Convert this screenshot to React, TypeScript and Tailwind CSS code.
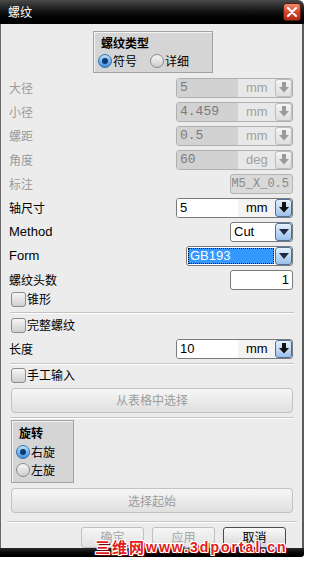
import React from 'react';

const cjk = "font-['Noto_Sans_CJK_SC',sans-serif]";
const latin = "font-['Liberation_Sans','Noto_Sans_CJK_SC',sans-serif]";
const mono = "font-['Liberation_Mono',monospace]";

function SpinArrow({ on }: { on: boolean }) {
  return (
    <div
      className={`w-[17px] h-full flex items-center justify-center rounded-[3px] border ${
        on
          ? 'border-[#4c6f9c] bg-gradient-to-b from-[#e4f0fc] to-[#9cc0ea]'
          : 'border-[#bdbdbd] bg-gradient-to-b from-[#f4f4f4] to-[#dedede]'
      }`}
    >
      <svg width="10" height="11" viewBox="0 0 10 11">
        <path d="M3 0h4v5h3l-5 5.5L0 5h3z" fill={on ? '#111' : '#9a9a9a'} />
      </svg>
    </div>
  );
}

function ComboArrow() {
  return (
    <div className="w-[17px] h-full flex items-center justify-center rounded-[3px] border border-[#4c6f9c] bg-gradient-to-b from-[#e4f0fc] to-[#9cc0ea]">
      <svg width="10" height="6" viewBox="0 0 10 6">
        <path d="M0 0h10L5 6z" fill="#1c2a44" />
      </svg>
    </div>
  );
}

function Spinner({ value, unit, on }: { value: string; unit: string; on: boolean }) {
  return (
    <div
      className={`w-[117px] h-[20px] flex rounded-[3px] border ${
        on ? 'border-[#7a7a7a] bg-white' : 'border-[#b0b0b0] bg-[#e6e6e6]'
      }`}
    >
      <div
        className={`w-[62px] h-full flex items-center pl-[3px] rounded-l-[2px] ${
          on ? `bg-white text-black text-[13px] ${latin}` : `bg-[#d2d2d2] text-[#7a7a7a] text-[13px] ${mono}`
        }`}
      >
        {value}
      </div>
      <div
        className={`w-[37px] h-full flex items-center justify-center text-[13px] ${latin} ${
          on ? 'bg-[#f3f3f3] text-black' : 'bg-[#e8e8e8] text-[#a0a0a0]'
        }`}
      >
        {unit}
      </div>
      <SpinArrow on={on} />
    </div>
  );
}

function Row({ label, on, children }: { label: string; on: boolean; children: React.ReactNode }) {
  const isLatin = /^[A-Za-z]/.test(label);
  return (
    <div className="h-[24px] flex items-center justify-between pl-[1px]">
      <span
        className={`${isLatin ? `${latin} text-[13px]` : `${cjk} text-[12px]`} ${
          on ? 'text-black' : 'text-[#9b9b9b]'
        }`}
      >
        {label}
      </span>
      {children}
    </div>
  );
}

function CheckBox({ label }: { label: string }) {
  return (
    <div className="h-[15px] flex items-center gap-[1px] pl-[3px]">
      <div className="w-[15px] h-[15px] rounded-[3px] border border-[#8c8c8c] bg-gradient-to-b from-[#f6f6f6] to-[#cfcfcf]" />
      <span className={`${cjk} text-[12px] text-black leading-none`}>{label}</span>
    </div>
  );
}

function Radio({ label, checked }: { label: string; checked: boolean }) {
  return (
    <div className="flex items-center gap-[1px]">
      {checked ? (
        <div className="w-[14px] h-[14px] rounded-full border border-[#2f6fae] bg-gradient-to-b from-[#bfe0fb] to-[#3d8fd8] flex items-center justify-center">
          <div className="w-[6px] h-[6px] rounded-full bg-[#0b3c78]" />
        </div>
      ) : (
        <div className="w-[14px] h-[14px] rounded-full border border-[#8a8a8a] bg-gradient-to-b from-[#f7f7f7] to-[#cdcdcd]" />
      )}
      <span className={`${cjk} text-[12px] text-black leading-none`}>{label}</span>
    </div>
  );
}

function Sep({ wide }: { wide?: boolean }) {
  return (
    <div className={`${wide ? 'ml-[-1px] w-[290px]' : 'ml-[2px] w-[284px]'} h-[2px] border-t border-[#c4c4c4] border-b border-b-white`} />
  );
}

function WideButton({ label }: { label: string }) {
  return (
    <div
      className={`ml-[3px] w-[282px] h-[25px] rounded-[4px] border border-[#c2c2c2] bg-gradient-to-b from-[#f6f6f6] to-[#e0e0e0] flex items-center justify-center ${cjk} text-[12px] text-[#9d9d9d]`}
    >
      {label}
    </div>
  );
}

function DlgButton({ label, on }: { label: string; on: boolean }) {
  return (
    <div
      className={`w-[63px] h-[21px] rounded-[3px] border flex items-start justify-center pt-[1px] ${cjk} text-[12px] leading-[15px] ${
        on
          ? 'border-[#4a4a4a] bg-gradient-to-b from-[#fafafa] to-[#d6d6d6] text-black'
          : 'border-[#c0c0c0] bg-gradient-to-b from-[#f6f6f6] to-[#e2e2e2] text-[#a6a6a6]'
      }`}
    >
      {label}
    </div>
  );
}

export default function App() {
  return (
    <div className="w-[315px] h-[561px] bg-white relative overflow-hidden">
      <div className="w-[304px] flex flex-col">
        {/* Title bar */}
        <div className="h-[24px] rounded-tr-[6px] bg-gradient-to-b from-[#4a4a4a] via-[#121212] to-[#000] flex items-center justify-between pl-[8px] pr-[3px]">
          <span className={`${cjk} text-[12px] text-white`}>螺纹</span>
          <div className="w-[18px] h-[18px] rounded-[3px] border border-[#5a1a10] bg-gradient-to-b from-[#f08a6c] via-[#d8442a] to-[#b22a14] flex items-center justify-center">
            <svg width="10" height="10" viewBox="0 0 10 10">
              <path d="M1 1L9 9M9 1L1 9" stroke="#fff" strokeWidth="2.2" strokeLinecap="round" />
            </svg>
          </div>
        </div>

        {/* Body */}
        <div className="h-[524px] bg-[#ececec] border-l border-[#6a6a6a] border-r-2 border-r-[#5c5c5c] pl-[7px] pr-[9px] flex flex-col">
          {/* 螺纹类型 */}
          <div className="mt-[7px] ml-[85px] w-[120px] h-[42px] bg-[#d5d5d5] border border-[#a3a3a3] shadow-[inset_1px_1px_0_#f4f4f4] px-[4px] pt-[2px] flex flex-col gap-[3px]">
            <span className={`${cjk} text-[12px] font-bold text-black leading-[17px] pl-[3px]`}>螺纹类型</span>
            <div className="flex items-center gap-[13px]">
              <Radio label="符号" checked />
              <Radio label="详细" checked={false} />
            </div>
          </div>

          <div className="mt-[3px] flex flex-col">
            <Row label="大径" on={false}>
              <Spinner value="5" unit="mm" on={false} />
            </Row>
            <Row label="小径" on={false}>
              <Spinner value="4.459" unit="mm" on={false} />
            </Row>
            <Row label="螺距" on={false}>
              <Spinner value="0.5" unit="mm" on={false} />
            </Row>
            <Row label="角度" on={false}>
              <Spinner value="60" unit="deg" on={false} />
            </Row>
            <Row label="标注" on={false}>
              <div className={`w-[63px] h-[20px] rounded-[3px] border border-[#b4b4b4] bg-[#d9d9d9] flex items-center justify-end pr-[3px] ${mono} text-[12px] text-[#8a8a8a]`}>
                M5_X_0.5
              </div>
            </Row>
            <Row label="轴尺寸" on>
              <Spinner value="5" unit="mm" on />
            </Row>
            <Row label="Method" on>
              <div className="w-[63px] h-[20px] flex rounded-[3px] border border-[#7a7a7a] bg-white">
                <div className={`flex-1 flex items-center pl-[3px] ${latin} text-[13px] text-black`}>Cut</div>
                <ComboArrow />
              </div>
            </Row>
            <Row label="Form" on>
              <div className="w-[107px] h-[20px] flex rounded-[3px] border border-[#7a7a7a] bg-white">
                <div className="flex-1 p-[1px]">
                  <div className={`h-full bg-[#3399ff] border border-dotted border-[#111] flex items-center pl-[1px] ${latin} text-[13px] text-white`}>
                    GB193
                  </div>
                </div>
                <ComboArrow />
              </div>
            </Row>
            <Row label="螺纹头数" on>
              <div className={`w-[63px] h-[20px] rounded-[3px] border border-[#7a7a7a] bg-white flex items-center justify-end pr-[3px] ${latin} text-[13px] text-black`}>
                1
              </div>
            </Row>
          </div>

          <CheckBox label="锥形" />
          <div className="mt-[5px]">
            <Sep />
          </div>
          <div className="mt-[4px]">
            <CheckBox label="完整螺纹" />
          </div>
          <div className="mt-[4px]">
            <Row label="长度" on>
              <Spinner value="10" unit="mm" on />
            </Row>
          </div>
          <div className="mt-[2px]">
            <Sep />
          </div>
          <div className="mt-[3px]">
            <CheckBox label="手工输入" />
          </div>
          <div className="mt-[5px]">
            <WideButton label="从表格中选择" />
          </div>
          <div className="mt-[4px]">
            <Sep />
          </div>

          {/* 旋转 */}
          <div className="mt-[1px] ml-[3px] w-[63px] h-[64px] bg-[#d5d5d5] border border-[#a3a3a3] shadow-[inset_1px_1px_0_#f4f4f4] px-[4px] pt-[3px] flex flex-col gap-[4px]">
            <span className={`${cjk} text-[12px] font-bold text-black leading-[17px] pl-[3px]`}>旋转</span>
            <Radio label="右旋" checked />
            <Radio label="左旋" checked={false} />
          </div>

          <div className="mt-[5px]">
            <WideButton label="选择起始" />
          </div>
          <div className="mt-[8px]">
            <Sep wide />
          </div>
          <div className="mt-[4px] ml-[73px] flex gap-[8px]">
            <DlgButton label="确定" on={false} />
            <DlgButton label="应用" on={false} />
            <DlgButton label="取消" on />
          </div>
        </div>

        {/* Bottom frame */}
        <div className="h-[9px] bg-gradient-to-b from-[#2a2a2a] to-[#000] rounded-br-[3px]" />
      </div>

      {/* Watermark */}
      <div className="absolute left-[95px] top-[539px] flex items-end text-[#e21b1b] font-bold leading-none [text-shadow:1px_0_0_#fff,-1px_0_0_#fff,0_1px_0_#fff,0_-1px_0_#fff,1px_1px_0_#fff,-1px_-1px_0_#fff,1px_-1px_0_#fff,-1px_1px_0_#fff,2px_2px_0_#7a0000]">
        <span className={`${cjk} text-[15px] leading-[15px] tracking-[2px]`}>三维网</span>
        <span className={`${latin} text-[14px] leading-[14px] tracking-[2px]`}>www.3dportal.cn</span>
      </div>
    </div>
  );
}
